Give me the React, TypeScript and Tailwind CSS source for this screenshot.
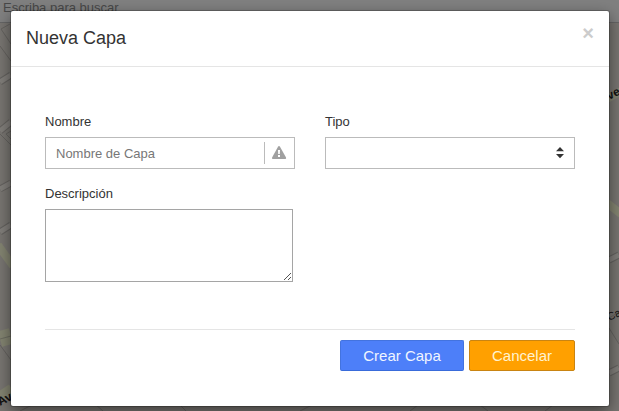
import React from "react";

function MapBackdrop() {
  return (
    <svg className="absolute inset-0" width="619" height="411" viewBox="0 0 619 411">
      <rect width="619" height="411" fill="#787571" />
      <g fill="none" stroke="#64625f" strokeWidth="1">
        <path d="M10 24L1 29L11 44M0 46L11 61M0 134L11 145M11 131L6 134L11 139M0 345L11 360" />
        <path d="M609 328L619 344M609 318L619 312" />
        <path d="M20 411L34 404M95 404L103 411M410 411L418 405M545 411L553 405M180 405L186 411M300 411L312 405M480 405L488 411" />
      </g>
      <g fill="none">
        <path d="M0 82L11 75M0 131L11 122M0 189L11 183M0 232L11 225M609 260L619 255M609 373L619 368" stroke="#64625f" strokeWidth="7" />
        <path d="M0 82L11 75M0 131L11 122M0 189L11 183M0 232L11 225M609 260L619 255M609 373L619 368" stroke="#817e7a" strokeWidth="5" />
        <path d="M-2 245L13 266M607 203L621 214M605 100L621 91" stroke="#838471" strokeWidth="8" />
        <path d="M0 339L11 336" stroke="#838471" strokeWidth="16" />
        <path d="M0 339L11 336" stroke="#6b6b60" strokeWidth="1" />
        <path d="M0 397L12 389" stroke="#838471" strokeWidth="11" />
      </g>
      <g fontFamily="Liberation Sans, Arial, sans-serif" fill="#111">
        <text x="0" y="406" fontSize="12" fontWeight="bold" transform="rotate(-28 0 406)">Av</text>
        <text x="609" y="100" fontSize="12" fontWeight="bold" transform="rotate(-26 609 100)">ve</text>
        <text x="609" y="321" fontSize="11" transform="rotate(-24 609 321)">Ca</text>
      </g>
    </svg>
  );
}

function Label({ children }: { children: React.ReactNode }) {
  return <label className="mb-[5px] block h-5 text-[13px] leading-5 text-[#333]">{children}</label>;
}

export default function App() {
  return (
    <div className="relative h-[411px] w-[619px] overflow-hidden font-['Liberation_Sans',Arial,sans-serif]">
      <MapBackdrop />
      <div className="absolute inset-x-0 top-0 h-[23px] border-b border-[#656565] bg-[#808080] pl-[3px] text-[13px] leading-[15px] text-[#484848]">
        Escriba para buscar
      </div>

      <div className="absolute left-[11px] top-[11px] flex h-[395px] w-[598px] flex-col rounded-[2px] bg-white shadow-[0_0_0_1px_rgba(0,0,0,0.2),0_5px_15px_rgba(0,0,0,0.5)]">
        <header className="flex h-14 items-center justify-between border-b border-[#e5e5e5] px-[15px]">
          <h4 className="-mt-[2px] text-[18px] leading-6 text-[#333]">Nueva Capa</h4>
          <button className="-mt-[11px] text-[20px] font-bold leading-5 text-[#ccc]">×</button>
        </header>

        <main className="px-[34px] pt-[45px]">
          <div className="grid grid-cols-2 gap-x-[30px] gap-y-[15px]">
            <div>
              <Label>Nombre</Label>
              <div className="flex h-8 items-center border border-[#bbb] pl-[10px] pr-[7px]">
                <input
                  className="mt-[2px] h-5 min-w-0 flex-1 text-[13px] leading-5 outline-none placeholder:text-[#777]"
                  placeholder="Nombre de Capa"
                />
                <div className="flex h-[22px] items-center border-l border-[#bbb] pl-[7px]">
                  <svg width="15" height="14" viewBox="0 0 15 14">
                    <path d="M7 0Q7.6 0 8 .7L14 11.6Q14.4 13 13.3 13H.8Q-.4 13 .1 11.6L6 .7Q6.4 0 7 0Z" fill="#a0a0a0" />
                    <path d="M6 4h2l-.2 4H6.2zM6 9h2v2H6z" fill="#fff" />
                  </svg>
                </div>
              </div>
            </div>
            <div>
              <Label>Tipo</Label>
              <div className="flex h-8 items-center justify-end border border-[#bbb] pr-[10px]">
                <svg width="8" height="12" viewBox="0 0 8 12" fill="#333">
                  <path d="M4 0L8 4.3H0zM0 7H8L4 11.3z" />
                </svg>
              </div>
            </div>
            <div>
              <Label>Descripción</Label>
              <div className="flex h-[73px] w-[248px] items-end justify-end border border-[#a5a5a5]">
                <svg width="9" height="9" viewBox="0 0 9 9" shapeRendering="crispEdges" stroke="#555" strokeWidth="1">
                  <path d="M1 7.5h1M2 6.5h1M3 5.5h1M4 4.5h1M5 3.5h1M6 2.5h1M7 1.5h1M5 7.5h1M6 6.5h1M7 5.5h1" />
                </svg>
              </div>
            </div>
          </div>

          <div className="mt-[47px] flex justify-end gap-[5px] border-t border-[#e5e5e5] pt-[10px]">
            <button className="h-[31px] w-[124px] rounded-[2px] border border-[#4373df] border-b-[#396bda] bg-[#4d7ff9] text-[15px] leading-5 text-[#f0f5ff]">
              Crear Capa
            </button>
            <button className="h-[31px] w-[106px] rounded-[2px] border border-[#c98412] bg-[#ffa000] text-[15px] leading-5 text-[#fff3d0]">
              Cancelar
            </button>
          </div>
        </main>
      </div>
    </div>
  );
}
